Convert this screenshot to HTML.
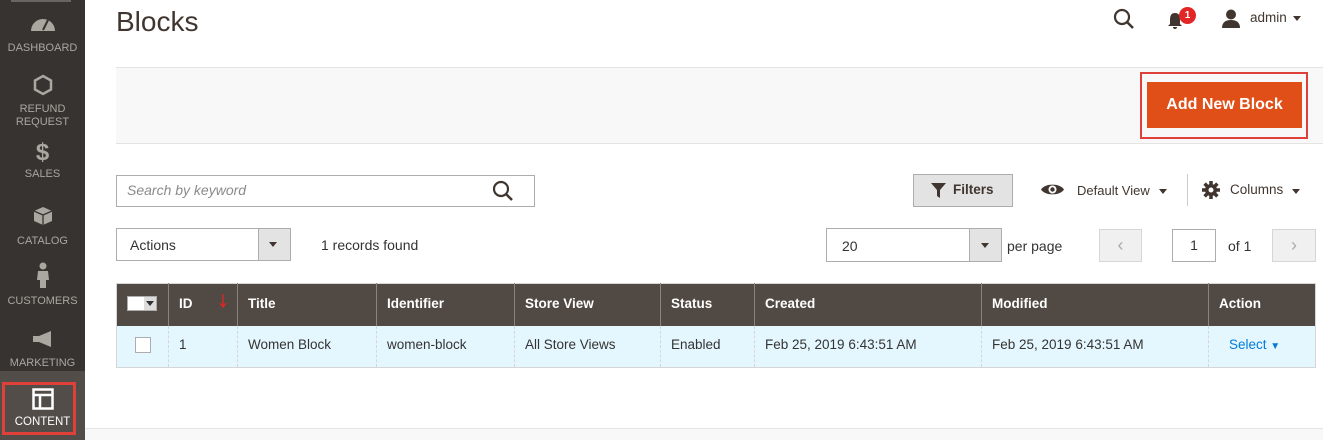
<!DOCTYPE html>
<html><head><style>
*{box-sizing:border-box;margin:0;padding:0}
body{width:1323px;height:440px;overflow:hidden;background:#fff;font-family:"Liberation Sans",sans-serif;font-size:14px;color:#333;position:relative}
.a{position:absolute}
.sb{left:0;top:0;width:85px;height:440px;background:#373330}
.nav{position:absolute;left:0;width:85px;text-align:center;color:#aaa6a0;font-size:11px;line-height:13px}
.box{position:absolute;border:1px solid #adadad;background:#fff}
th{background:#514943;color:#fff;font-weight:bold;text-align:left;padding-left:10px;height:42px;border-left:1px solid #8a837f;font-size:13.5px;padding-bottom:3px}
td{height:42px;padding-left:10px;border-left:1px dashed #d6d6d6;font-size:13.5px;color:#333;background:#e5f7fe;padding-bottom:3px}
table{border-collapse:collapse;position:absolute;left:116px;top:283px;width:1200px;border:1px solid #d6d6d6}
</style></head><body>
<div class="a sb"></div>
<div class="a" style="left:11px;top:0;width:60px;height:2px;background:#6a6560"></div>
<div class="nav" style="top:14px"><svg width="26" height="18" viewBox="0 0 26 18"><path d="M1 17A12 12 0 0 1 25 17Z" fill="#aaa6a0"/><path d="M13 16L18 6" stroke="#373330" stroke-width="2"/></svg><div style="margin-top:6px">DASHBOARD</div></div>
<div class="nav" style="top:74px"><svg width="20" height="22" viewBox="0 0 20 22"><path d="M10 2L18 6.5V15.5L10 20L2 15.5V6.5Z" fill="none" stroke="#aaa6a0" stroke-width="2.5"/></svg><div style="margin-top:3px">REFUND<br>REQUEST</div></div>
<div class="nav" style="top:141px"><div style="font-size:24px;font-weight:bold;line-height:24px">$</div><div style="margin-top:3px">SALES</div></div>
<div class="nav" style="top:206px"><svg width="20" height="20" viewBox="0 0 20 20"><path d="M10 1L19 5V15L10 19L1 15V5Z" fill="#aaa6a0"/><path d="M1 5L10 9L19 5M10 9V19" stroke="#373330" stroke-width="1.3" fill="none"/></svg><div style="margin-top:5px">CATALOG</div></div>
<div class="nav" style="top:262px"><svg width="14" height="26" viewBox="0 0 14 26"><circle cx="7" cy="4" r="3.5" fill="#aaa6a0"/><path d="M2 9H12L13 18H10V26H4V18H1Z" fill="#aaa6a0"/></svg><div style="margin-top:3px">CUSTOMERS</div></div>
<div class="nav" style="top:330px"><svg width="24" height="18" viewBox="0 0 24 18"><path d="M2 6H8L20 1V17L8 12H2Z" fill="#aaa6a0"/></svg><div style="margin-top:5px">MARKETING</div></div>
<div class="a" style="left:0;top:371px;width:85px;height:69px;background:#524d49"></div>
<div class="a" style="left:2px;top:382px;width:74px;height:53px;border:3px solid #e0403a"></div>
<div class="nav" style="top:388px;color:#fff"><svg width="22" height="22" viewBox="0 0 22 22"><rect x="1.5" y="1.5" width="19" height="19" fill="none" stroke="#fff" stroke-width="2.5"/><path d="M2 7H20M8 7V20" stroke="#fff" stroke-width="2.5"/></svg><div style="margin-top:2px;font-size:11.5px">CONTENT</div></div>

<div class="a" style="left:116px;top:6px;font-size:28px;color:#41362f">Blocks</div>
<svg class="a" style="left:1113px;top:8px" width="22" height="22" viewBox="0 0 22 22"><circle cx="9" cy="9" r="7" fill="none" stroke="#41362f" stroke-width="2.2"/><path d="M14 14L20 20" stroke="#41362f" stroke-width="2.5"/></svg>
<svg class="a" style="left:1167px;top:12px" width="16" height="18" viewBox="0 0 16 18"><path d="M8 1C4 1 3 4 3 8V12L1 14H15L13 12V8C13 4 12 1 8 1Z M6 15A2 2 0 0 0 10 15Z" fill="#41362f"/></svg>
<div class="a" style="left:1179px;top:7px;width:17px;height:17px;border-radius:50%;background:#e22626;color:#fff;font-size:10px;font-weight:bold;text-align:center;line-height:17px">1</div>
<svg class="a" style="left:1221px;top:9px" width="20" height="19" viewBox="0 0 20 19"><circle cx="10" cy="5.5" r="5" fill="#41362f"/><path d="M1 19C1 13 5 11 10 11S19 13 19 19Z" fill="#41362f"/></svg>
<div class="a" style="left:1250px;top:10px;font-size:13.5px;color:#41362f">admin</div>
<div class="a" style="left:1293px;top:16px;border:4.5px solid transparent;border-top:5px solid #41362f"></div>

<div class="a" style="left:116px;top:67px;width:1207px;height:77px;background:#f8f8f8;border-top:1px solid #e3e3e3;border-bottom:1px solid #e3e3e3"></div>
<div class="a" style="left:1140px;top:72px;width:168px;height:67px;border:2px solid #e0403a"></div>
<div class="a" style="left:1147px;top:82px;width:155px;height:46px;background:#e04f18;color:#fff;font-weight:bold;font-size:16px;text-align:center;line-height:46px">Add New Block</div>

<div class="box" style="left:116px;top:175px;width:419px;height:32px"></div>
<div class="a" style="left:127px;top:182px;font-style:italic;color:#8a8a8a">Search by keyword</div>
<svg class="a" style="left:492px;top:180px" width="22" height="22" viewBox="0 0 22 22"><circle cx="9" cy="9" r="7" fill="none" stroke="#41362f" stroke-width="2.2"/><path d="M14 14L20 20" stroke="#41362f" stroke-width="2.5"/></svg>

<div class="a" style="left:913px;top:174px;width:100px;height:33px;background:#e3e3e3;border:1px solid #adadad"></div>
<svg class="a" style="left:931px;top:183px" width="15" height="15" viewBox="0 0 15 15"><path d="M0 0H15L9 7V15L6 13V7Z" fill="#41362f"/></svg>
<div class="a" style="left:953px;top:182px;font-weight:bold;font-size:13.5px;color:#41362f">Filters</div>
<svg class="a" style="left:1040px;top:182px" width="25" height="15" viewBox="0 0 25 15"><path d="M1 7.5C5 1 20 1 24 7.5C20 14 5 14 1 7.5Z" fill="#41362f"/><circle cx="12.5" cy="7.5" r="4" fill="#fff"/><circle cx="12.5" cy="7.5" r="2.2" fill="#41362f"/></svg>
<div class="a" style="left:1077px;top:183px;font-size:13px;color:#41362f">Default View</div>
<div class="a" style="left:1159px;top:189px;border:4.5px solid transparent;border-top:5px solid #41362f"></div>
<div class="a" style="left:1187px;top:174px;width:1px;height:32px;background:#ccc"></div>
<svg class="a" style="left:1202px;top:181px" width="18" height="18" viewBox="0 0 18 18"><circle cx="9" cy="9" r="6" fill="#41362f"/><path d="M9 0V18M0 9H18M2.6 2.6L15.4 15.4M15.4 2.6L2.6 15.4" stroke="#41362f" stroke-width="3.5"/><circle cx="9" cy="9" r="2.5" fill="#fff"/></svg>
<div class="a" style="left:1230px;top:182px;font-size:13.5px;color:#41362f">Columns</div>
<div class="a" style="left:1292px;top:189px;border:4.5px solid transparent;border-top:5px solid #41362f"></div>

<div class="box" style="left:116px;top:228px;width:175px;height:33px"></div>
<div class="a" style="left:258px;top:229px;width:32px;height:31px;background:#e3e3e3;border-left:1px solid #adadad"></div>
<div class="a" style="left:269px;top:242px;border:4.5px solid transparent;border-top:5px solid #41362f"></div>
<div class="a" style="left:130px;top:237px">Actions</div>
<div class="a" style="left:321px;top:237px">1 records found</div>

<div class="box" style="left:826px;top:228px;width:176px;height:34px"></div>
<div class="a" style="left:969px;top:229px;width:32px;height:32px;background:#e3e3e3;border-left:1px solid #adadad"></div>
<div class="a" style="left:981px;top:243px;border:4.5px solid transparent;border-top:5px solid #41362f"></div>
<div class="a" style="left:842px;top:238px">20</div>
<div class="a" style="left:1007px;top:238px">per page</div>
<div class="a" style="left:1099px;top:229px;width:43px;height:33px;background:#f0f0f0;border:1px solid #d6d6d6;color:#aaa;text-align:center;line-height:30px;font-size:18px">‹</div>
<div class="box" style="left:1172px;top:229px;width:44px;height:33px;text-align:center;line-height:31px">1</div>
<div class="a" style="left:1228px;top:238px">of 1</div>
<div class="a" style="left:1272px;top:229px;width:44px;height:33px;background:#f0f0f0;border:1px solid #d6d6d6;color:#aaa;text-align:center;line-height:30px;font-size:18px">›</div>

<table>
<tr><th style="width:52px;border-left:none"><span style="display:inline-block;width:30px;height:15px;background:#fff;border:1px solid #adadad;vertical-align:middle;position:relative"><span style="position:absolute;right:0;top:0;width:12px;height:13px;background:#ddd"></span><span style="position:absolute;right:2px;top:4px;border:4px solid transparent;border-top:5px solid #333"></span></span></th>
<th style="width:69px">ID</th><th style="width:139px">Title</th><th style="width:138px">Identifier</th><th style="width:146px">Store View</th><th style="width:94px">Status</th><th style="width:227px">Created</th><th style="width:227px">Modified</th><th>Action</th></tr>
<tr><td style="border-left:none;padding-left:18px"><span style="display:inline-block;width:16px;height:16px;border:1px solid #adadad;background:#fff;vertical-align:middle"></span></td><td>1</td><td>Women Block</td><td>women-block</td><td>All Store Views</td><td>Enabled</td><td>Feb 25, 2019 6:43:51 AM</td><td>Feb 25, 2019 6:43:51 AM</td><td style="padding-left:20px;color:#007bdb">Select <span style="font-size:10px">▼</span></td></tr>
</table>
<svg class="a" style="left:219px;top:294px" width="8" height="14" viewBox="0 0 8 14"><path d="M4 0V12M1 9L4 13L7 9" stroke="#e22626" stroke-width="1.3" fill="none"/></svg>
<div class="a" style="left:85px;top:428px;width:1238px;height:12px;background:#f8f8f8;border-top:1px solid #e3e3e3"></div>
</body></html>
